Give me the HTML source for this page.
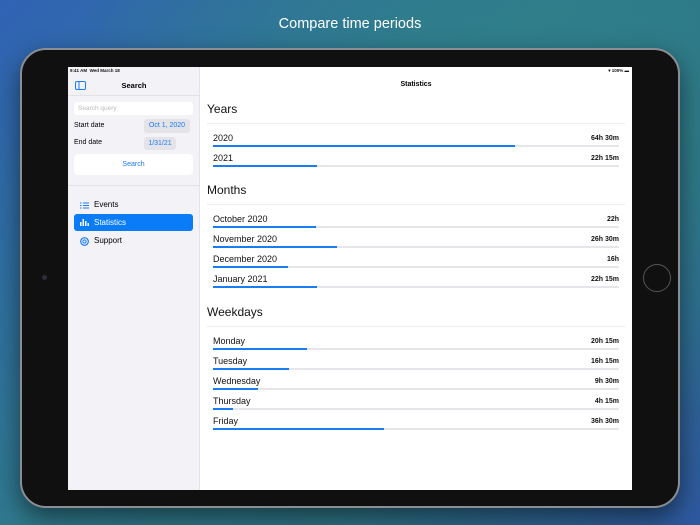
<!DOCTYPE html>
<html><head><style>
*{margin:0;padding:0;box-sizing:border-box}
body{width:700px;height:525px;overflow:hidden;position:relative;font-family:"Liberation Sans",sans-serif;
background:radial-gradient(ellipse at 70% 20%,#2f7f8a 0%,transparent 60%),linear-gradient(135deg,#3063b5 0%,#2f7a8c 45%,#2d7484 70%,#2e58a0 100%)}
.title{position:absolute;top:16px;width:100%;text-align:center;color:#fff;font-size:14.5px}
.dev{position:absolute;left:20px;top:48px;width:660px;height:460px;background:#101010;border-radius:26px;border:2px solid #8a8e92;box-shadow:0 10px 25px rgba(0,0,0,.5)}
.cam{position:absolute;left:42px;top:275px;width:5px;height:5px;border-radius:50%;background:#2a2f3a}
.home{position:absolute;left:643px;top:264px;width:28px;height:28px;border-radius:50%;border:1.5px solid #555}
.scr{position:absolute;left:68px;top:67px;width:564px;height:423px;background:#fff;overflow:hidden}
.side{position:absolute;left:0;top:0;width:132px;height:423px;background:#f2f2f7;border-right:1px solid #e4e4e8}
.t{position:absolute;white-space:nowrap}
.s5{font-size:5px;color:#111}
.bar{position:absolute;left:145px;width:406px;height:2px;background:#e6e6ea}
.bar i{position:absolute;left:0;top:0;height:2px;background:#1a7cf5}
.lab{position:absolute;left:145px;font-size:9px;color:#111}
.val{position:absolute;right:13px;font-size:7px;font-weight:bold;color:#111}
.h{position:absolute;left:139px;font-size:12px;color:#111}
.sep{position:absolute;left:139px;width:418px;height:1px;background:#eee}
</style></head><body>
<div class="title">Compare time periods</div>
<div class="dev"></div>
<div class="cam"></div><div class="home"></div>
<div class="scr">
<div class="side">
<div class="t s5" style="left:2px;top:1px;font-weight:bold;font-size:4.5px">9:41 AM &nbsp;Wed March 18</div>
<svg class="t" style="left:7px;top:14px" width="11" height="9"><rect x=".5" y=".5" width="10" height="8" rx="1.5" fill="none" stroke="#1a7cf5"/><line x1="4" y1="1" x2="4" y2="8" stroke="#1a7cf5"/></svg>
<div class="t" style="left:0;width:132px;text-align:center;top:14px;font-size:7.5px;font-weight:bold">Search</div>
<div class="t" style="left:0;top:28px;width:132px;height:1px;background:#e2e2e6"></div>
<div class="t" style="left:6px;top:35px;width:119px;height:13px;background:#fff;border-radius:3px;font-size:6.5px;color:#bbb;padding:3px 4px">Search query</div>
<div class="t" style="left:6px;top:55px;font-size:7px">Start date</div>
<div class="t" style="left:76px;top:52px;width:46px;height:14px;background:#e3e3e8;border-radius:3px;font-size:7px;color:#1a7cf5;text-align:center;line-height:14px">Oct 1, 2020</div>
<div class="t" style="left:6px;top:72px;font-size:7px">End date</div>
<div class="t" style="left:76px;top:70px;width:32px;height:13px;background:#e3e3e8;border-radius:3px;font-size:7px;color:#1a7cf5;text-align:center;line-height:13px">1/31/21</div>
<div class="t" style="left:6px;top:87px;width:119px;height:21px;background:#fff;border-radius:4px;font-size:7px;color:#1a7cf5;text-align:center;line-height:22px">Search</div>
<div class="t" style="left:0;top:118px;width:132px;height:1px;background:#e2e2e6"></div>
<svg class="t" style="left:12px;top:135px" width="9" height="7"><g stroke="#1a7cf5" stroke-width="1"><line x1="0" y1="1" x2="1.5" y2="1"/><line x1="3" y1="1" x2="9" y2="1"/><line x1="0" y1="3.5" x2="1.5" y2="3.5"/><line x1="3" y1="3.5" x2="9" y2="3.5"/><line x1="0" y1="6" x2="1.5" y2="6"/><line x1="3" y1="6" x2="9" y2="6"/></g></svg>
<div class="t" style="left:26px;top:133px;font-size:8px">Events</div>
<div class="t" style="left:6px;top:147px;width:119px;height:17px;background:#0a7cf7;border-radius:3px"></div>
<svg class="t" style="left:12px;top:152px" width="9" height="7"><g fill="#fff"><rect x="0" y="3" width="1.5" height="4"/><rect x="2.5" y="0" width="1.5" height="7"/><rect x="5" y="2" width="1.5" height="5"/><rect x="7.5" y="4" width="1.5" height="3"/></g></svg>
<div class="t" style="left:26px;top:151px;font-size:8px;color:#fff">Statistics</div>
<svg class="t" style="left:12px;top:170px" width="9" height="9"><circle cx="4.5" cy="4.5" r="3.8" fill="none" stroke="#1a7cf5" stroke-width="1.2"/><circle cx="4.5" cy="4.5" r="1.6" fill="none" stroke="#1a7cf5" stroke-width="1"/></svg>
<div class="t" style="left:26px;top:169px;font-size:8px">Support</div>
</div>
<div class="t s5" style="right:3px;top:1px;font-size:4.5px;font-weight:bold">▾ 100% ▬</div>
<div class="t" style="left:132px;width:432px;text-align:center;top:14px;font-size:7px;font-weight:bold">Statistics</div>

<div class="h" style="top:35px">Years</div><div class="sep" style="top:56px"></div>
<div class="lab" style="top:66px">2020</div><div class="val" style="top:68px">64h 30m</div><div class="bar" style="top:78px"><i style="width:302px"></i></div>
<div class="lab" style="top:86px">2021</div><div class="val" style="top:88px">22h 15m</div><div class="bar" style="top:98px"><i style="width:104px"></i></div>

<div class="h" style="top:116px">Months</div><div class="sep" style="top:137px"></div>
<div class="lab" style="top:147px">October 2020</div><div class="val" style="top:149px">22h</div><div class="bar" style="top:159px"><i style="width:103px"></i></div>
<div class="lab" style="top:167px">November 2020</div><div class="val" style="top:169px">26h 30m</div><div class="bar" style="top:179px"><i style="width:124px"></i></div>
<div class="lab" style="top:187px">December 2020</div><div class="val" style="top:189px">16h</div><div class="bar" style="top:199px"><i style="width:75px"></i></div>
<div class="lab" style="top:207px">January 2021</div><div class="val" style="top:209px">22h 15m</div><div class="bar" style="top:219px"><i style="width:104px"></i></div>

<div class="h" style="top:238px">Weekdays</div><div class="sep" style="top:259px"></div>
<div class="lab" style="top:269px">Monday</div><div class="val" style="top:271px">20h 15m</div><div class="bar" style="top:281px"><i style="width:94px"></i></div>
<div class="lab" style="top:289px">Tuesday</div><div class="val" style="top:291px">16h 15m</div><div class="bar" style="top:301px"><i style="width:76px"></i></div>
<div class="lab" style="top:309px">Wednesday</div><div class="val" style="top:311px">9h 30m</div><div class="bar" style="top:321px"><i style="width:45px"></i></div>
<div class="lab" style="top:329px">Thursday</div><div class="val" style="top:331px">4h 15m</div><div class="bar" style="top:341px"><i style="width:20px"></i></div>
<div class="lab" style="top:349px">Friday</div><div class="val" style="top:351px">36h 30m</div><div class="bar" style="top:361px"><i style="width:171px"></i></div>
</div>
</body></html>
